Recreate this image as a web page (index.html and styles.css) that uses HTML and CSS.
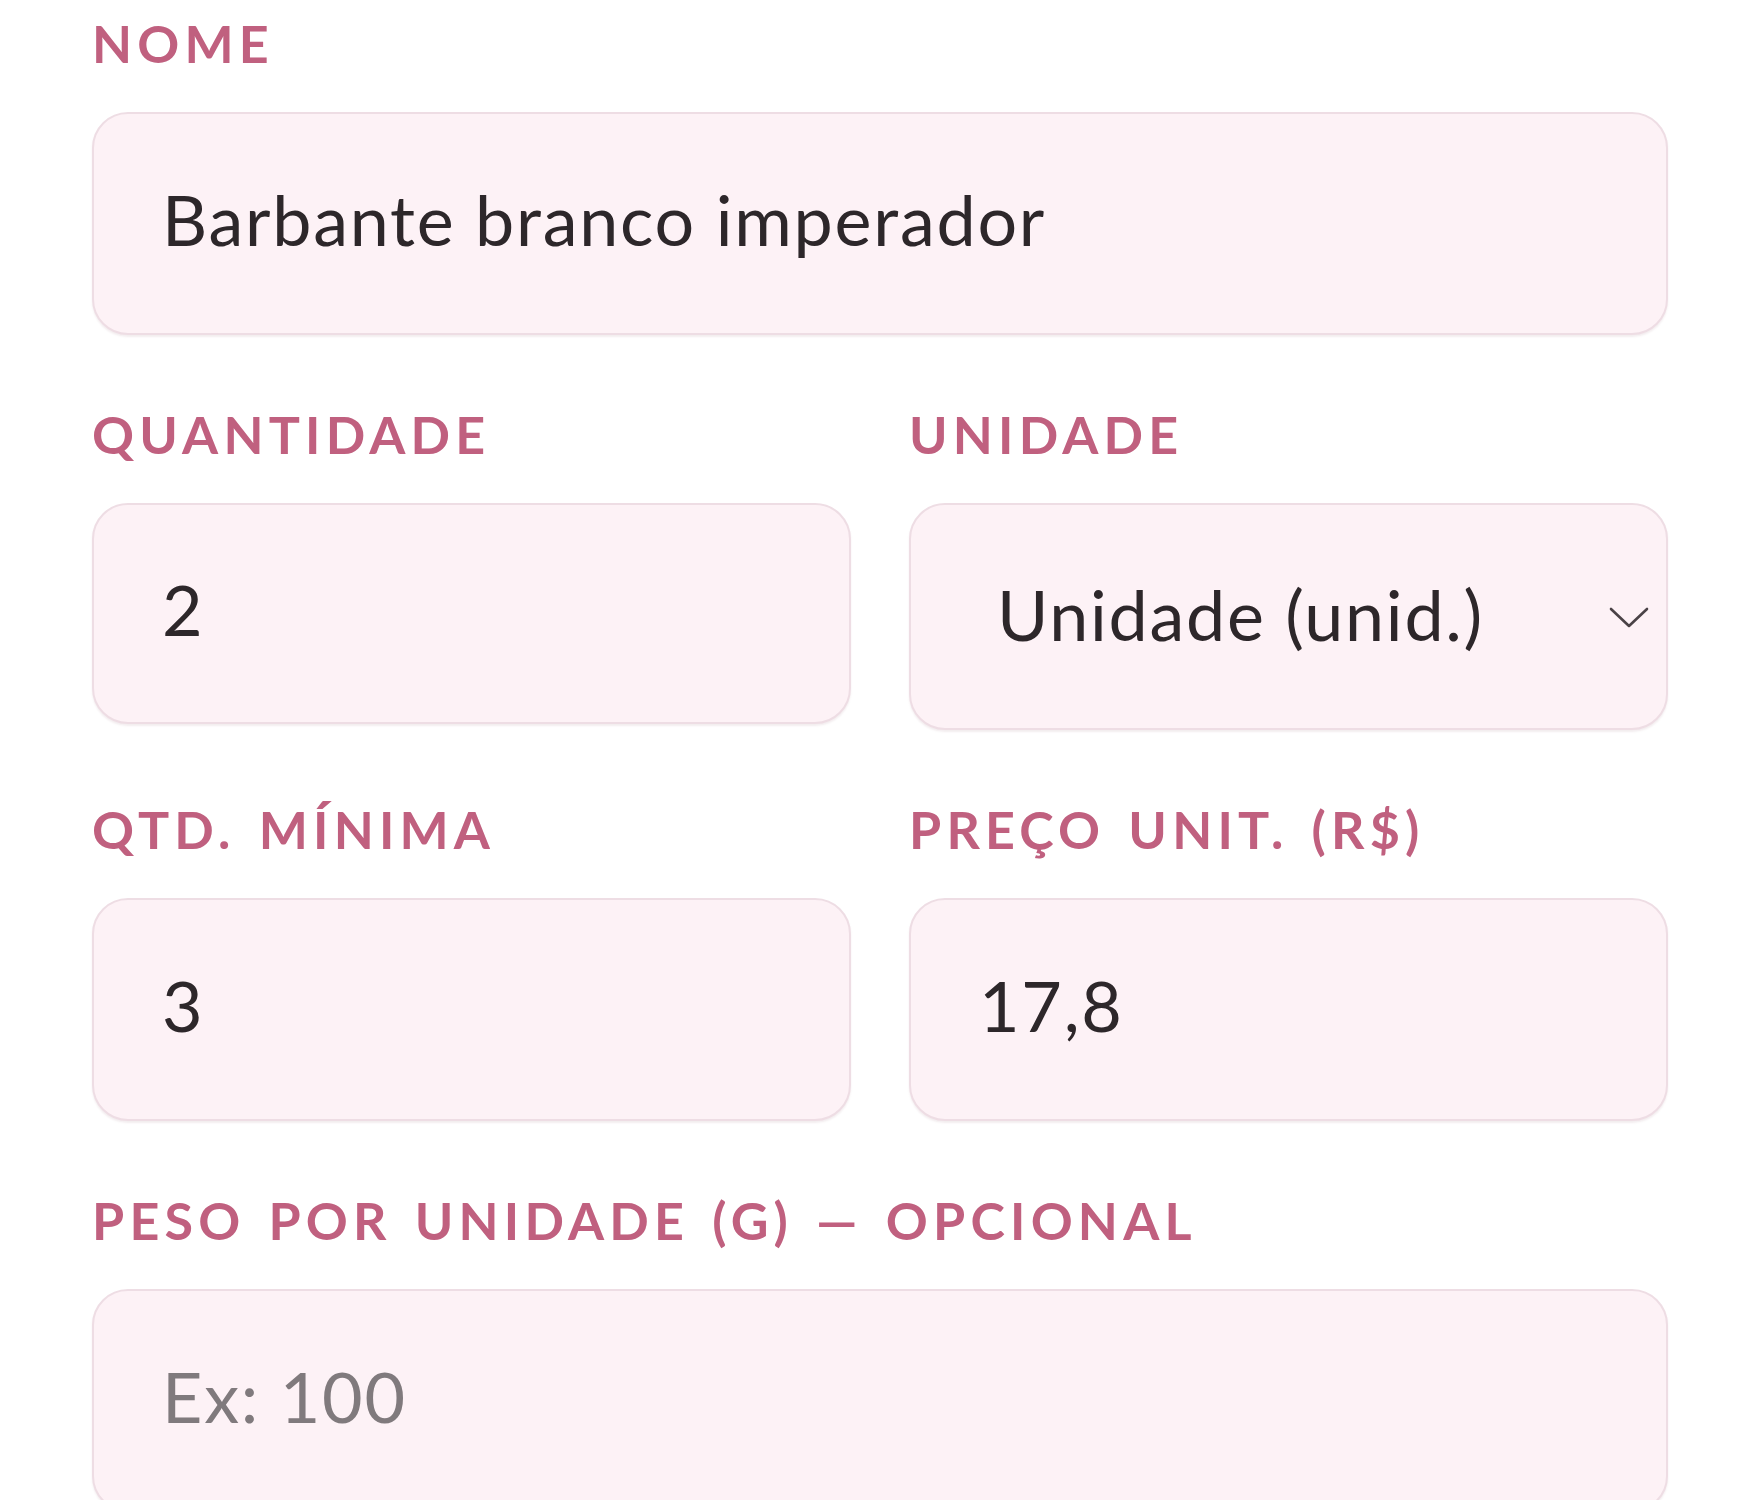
FILE: index.html
```html
<!DOCTYPE html>
<html lang="pt-BR">
<head>
<meta charset="utf-8">
<title>Material</title>
<link rel="stylesheet" href="styles.css">
</head>
<body>
<form class="form">
  <div class="field">
    <label class="label" for="nome">Nome</label>
    <input class="input" id="nome" type="text" value="Barbante branco imperador">
  </div>
  <div class="row">
    <div class="field">
      <label class="label" for="qtd">Quantidade</label>
      <input class="input input-short" id="qtd" type="text" value="2">
    </div>
    <div class="field">
      <label class="label" for="unidade">Unidade</label>
      <div class="select-wrap">
        <select class="select" id="unidade">
          <option>Unidade (unid.)</option>
        </select>
        <svg class="chevron" width="40" height="22" viewBox="0 0 40 22" aria-hidden="true"><polyline points="2,2 20,19 38,2" fill="none" stroke="#4a4246" stroke-width="2.6" stroke-linecap="round" stroke-linejoin="round"/></svg>
      </div>
    </div>
  </div>
  <div class="row">
    <div class="field">
      <label class="label" for="min">Qtd. mínima</label>
      <input class="input" id="min" type="text" value="3">
    </div>
    <div class="field">
      <label class="label" for="preco">Preço unit. (R$)</label>
      <input class="input" id="preco" type="text" value="17,8">
    </div>
  </div>
  <div class="field">
    <label class="label" for="peso">Peso por unidade (g) — opcional</label>
    <input class="input" id="peso" type="text" placeholder="Ex: 100">
  </div>
</form>
</body>
</html>
```

FILE: styles.css
```css
* { box-sizing: border-box; }

html, body {
  margin: 0;
  padding: 0;
  background: #ffffff;
}

body {
  font-family: "Lato", "Noto Sans", sans-serif;
  color: #2b2327;
}

.form {
  display: flex;
  flex-direction: column;
  gap: 68px;
  padding: 12px 92px 0;
}

.row {
  display: grid;
  grid-template-columns: 1fr 1fr;
  column-gap: 58px;
  align-items: start;
}

.field {
  display: flex;
  flex-direction: column;
}

.label {
  font-family: "Lato", "Noto Sans", sans-serif;
  font-weight: 700;
  font-size: 52px;
  line-height: 62px;
  height: 62px;
  letter-spacing: 0.1em;
  word-spacing: 0.1em;
  text-transform: uppercase;
  color: #c0607f;
  margin-bottom: 38px;
  white-space: nowrap;
}

.input,
.select {
  width: 100%;
  height: 223px;
  margin: 0;
  padding: 0 40px 9px 68px;
  border: 2px solid #eedde4;
  border-radius: 36px;
  background: #fdf2f6;
  font-family: "Lato", "Noto Sans", sans-serif;
  font-size: 70px;
  font-weight: 400;
  letter-spacing: 0.025em;
  color: #2d272a;
  outline: none;
  box-shadow: 0 2px 2px rgba(170, 130, 145, 0.14);
}

.input-short {
  height: 221px;
}

.input::placeholder {
  color: #807a7d;
  opacity: 1;
}

.select-wrap {
  position: relative;
}

.select {
  height: 227px;
  padding-left: 86px;
  padding-bottom: 6px;
  appearance: none;
  -webkit-appearance: none;
}

.chevron {
  position: absolute;
  right: 19px;
  top: 104px;
  pointer-events: none;
}
```
